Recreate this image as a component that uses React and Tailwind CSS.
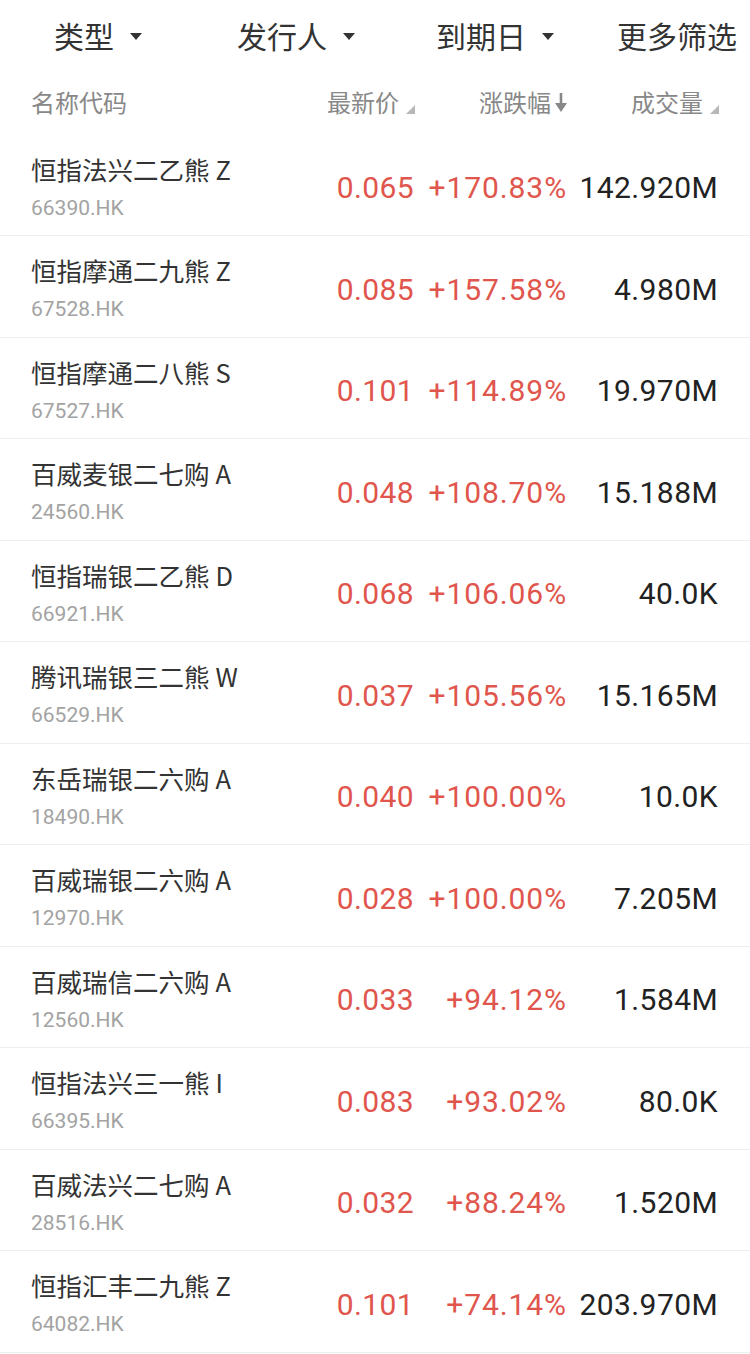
import React from 'react';

const rows = [
  ['恒指法兴二乙熊', 'Z', '66390.HK', '0.065', '+170.83%', '142.920M'],
  ['恒指摩通二九熊', 'Z', '67528.HK', '0.085', '+157.58%', '4.980M'],
  ['恒指摩通二八熊', 'S', '67527.HK', '0.101', '+114.89%', '19.970M'],
  ['百威麦银二七购', 'A', '24560.HK', '0.048', '+108.70%', '15.188M'],
  ['恒指瑞银二乙熊', 'D', '66921.HK', '0.068', '+106.06%', '40.0K'],
  ['腾讯瑞银三二熊', 'W', '66529.HK', '0.037', '+105.56%', '15.165M'],
  ['东岳瑞银二六购', 'A', '18490.HK', '0.040', '+100.00%', '10.0K'],
  ['百威瑞银二六购', 'A', '12970.HK', '0.028', '+100.00%', '7.205M'],
  ['百威瑞信二六购', 'A', '12560.HK', '0.033', '+94.12%', '1.584M'],
  ['恒指法兴三一熊', 'I', '66395.HK', '0.083', '+93.02%', '80.0K'],
  ['百威法兴二七购', 'A', '28516.HK', '0.032', '+88.24%', '1.520M'],
  ['恒指汇丰二九熊', 'Z', '64082.HK', '0.101', '+74.14%', '203.970M'],
];

const cjk = { fontFamily: '"Noto Sans CJK SC", "Noto Sans", sans-serif' };
const num = { fontFamily: 'Roboto, "Noto Sans", sans-serif' };

function Caret() {
  return (
    <svg width="12" height="7" viewBox="0 0 12 7" className="ml-[16px] mt-[2px]">
      <path d="M0 0 L12 0 L6 7 Z" fill="#333" />
    </svg>
  );
}

function Corner() {
  return (
    <svg width="9" height="9" viewBox="0 0 9 9" className="ml-[7px] self-end mb-[6px]">
      <path d="M9 0 L9 9 L0 9 Z" fill="#b8b8b8" />
    </svg>
  );
}

function DownArrow() {
  return (
    <svg width="14" height="21" viewBox="0 0 14 21" className="ml-[3px]">
      <path d="M7 1 L7 17" stroke="#888" strokeWidth="2.6" />
      <path d="M1 11 L7 20 L13 11 Z" fill="#888" />
    </svg>
  );
}

export default function App() {
  return (
    <div className="w-[750px] bg-white" style={cjk}>
      <div className="flex items-center h-[70px] pl-[54px] text-[30px] text-[#333]">
        <div className="w-[183px] flex items-center">类型<Caret /></div>
        <div className="w-[199px] flex items-center">发行人<Caret /></div>
        <div className="w-[181px] flex items-center">到期日<Caret /></div>
        <div className="flex items-center">更多筛选</div>
      </div>

      <div className="flex items-center h-[64.5px] pl-[31px] pr-[31px] text-[24px] text-[#888]">
        <div className="flex-1">名称代码</div>
        <div className="flex items-center justify-end">最新价<Corner /></div>
        <div className="w-[153px] flex items-center justify-end">涨跌幅<DownArrow /></div>
        <div className="w-[151px] flex items-center justify-end">成交量<Corner /></div>
      </div>

      {rows.map(([name, suffix, code, price, change, vol]) => (
        <div key={code} className="flex items-center h-[101.5px] pl-[31px] pr-[32px] border-b border-[#eeeeee]">
          <div className="flex-1 flex flex-col pt-[4px]">
            <div className="text-[25.5px] leading-[36px] text-[#333]">
              {name}<span className="ml-[6px]">{suffix}</span>
            </div>
            <div className="text-[21px] leading-[30px] mt-[6px] text-[#a3a3a3]" style={num}>{code}</div>
          </div>
          <div className="flex items-center pt-[6px] text-[30px] tracking-[0.4px]" style={num}>
            <div className="text-right text-[#e0554c]">{price}</div>
            <div className="w-[153px] text-right text-[#e0554c] tracking-[0.9px]">{change}</div>
            <div className="w-[151px] text-right text-[#222]">{vol}</div>
          </div>
        </div>
      ))}
    </div>
  );
}
